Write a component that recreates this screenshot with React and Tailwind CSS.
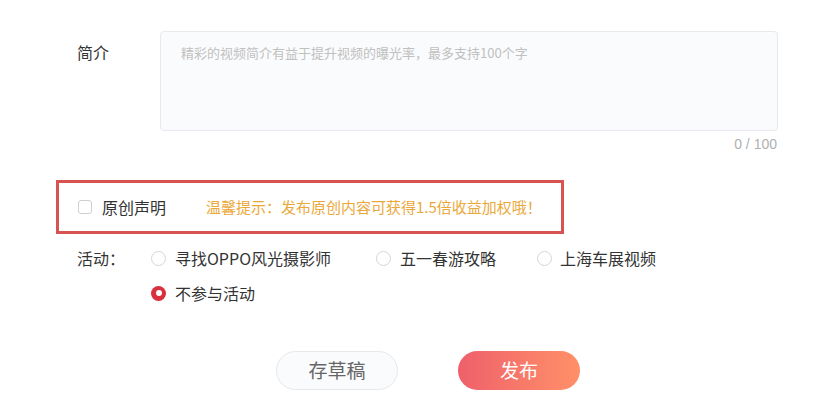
export default function App() {
  const font = { fontFamily: '"Noto Sans CJK SC", "Noto Sans", sans-serif' };
  const Radio = ({ checked }) =>
    checked ? (
      <span className="w-[15px] h-[15px] rounded-full bg-[#d8303c] flex items-center justify-center shrink-0">
        <span className="w-[6px] h-[6px] rounded-full bg-white" />
      </span>
    ) : (
      <span className="w-[15px] h-[15px] rounded-full border border-[#d5d5d5] bg-white shrink-0" />
    );
  return (
    <div className="w-[832px] h-[400px] bg-white relative overflow-hidden text-[#333]" style={font}>
      <div className="flex pt-[31px] pl-[77px]">
        <div className="w-[83px] text-[16px] leading-[20px] pt-[11px] text-[#333]">简介</div>
        <div className="flex flex-col">
          <div className="w-[618px] h-[100px] border border-[#e8e9ec] rounded-[4px] bg-[#fafbfc] px-[20px] pt-[12px] text-[13px] leading-[18px] text-[#c0c0c0]">
            精彩的视频简介有益于提升视频的曝光率，最多支持100个字
          </div>
          <div className="text-right pr-[1px] mt-[4px] text-[14px] leading-[18px] text-[#b0b0b0]" style={{ fontFamily: '"Liberation Sans", "Noto Sans CJK SC", sans-serif' }}>0 / 100</div>
        </div>
      </div>
      <div className="ml-[56px] mt-[27px] w-[508px] h-[54px] border-[3px] border-[#d6534f] flex items-center pl-[19px]">
        <span className="w-[14px] h-[14px] rounded-[3px] border border-[#cfcfcf] bg-white shrink-0" />
        <span className="ml-[10px] text-[16px] leading-[20px] text-[#333]">原创声明</span>
        <span className="ml-[40px] text-[15px] leading-[20px] text-[#eba83a]">温馨提示：发布原创内容可获得1.5倍收益加权哦！</span>
      </div>
      <div className="flex pl-[77px] mt-[14px]">
        <div className="w-[74px] text-[16px] leading-[20px] text-[#333]">活动：</div>
        <div className="flex flex-col gap-[15px]">
          <div className="flex items-center h-[20px]">
            <div className="w-[225px] flex items-center gap-[9px]">
              <Radio />
              <span className="text-[16px] leading-[20px] text-[#333]">寻找OPPO风光摄影师</span>
            </div>
            <div className="w-[161px] flex items-center gap-[9px]">
              <Radio />
              <span className="text-[16px] leading-[20px] text-[#333]">五一春游攻略</span>
            </div>
            <div className="flex items-center gap-[8px]">
              <Radio />
              <span className="text-[16px] leading-[20px] text-[#333]">上海车展视频</span>
            </div>
          </div>
          <div className="flex items-center h-[20px] gap-[9px]">
            <Radio checked />
            <span className="text-[16px] leading-[20px] text-[#333]">不参与活动</span>
          </div>
        </div>
      </div>
      <div className="flex pl-[276px] mt-[48px] gap-[60px]">
        <button className="w-[122px] h-[39px] rounded-full border border-[#e6e8eb] bg-[#fafbfc] text-[19px] text-[#666]">存草稿</button>
        <button className="w-[122px] h-[39px] rounded-full bg-gradient-to-r from-[#ef5f6b] to-[#ff9068] text-[19px] text-white">发布</button>
      </div>
    </div>
  );
}
